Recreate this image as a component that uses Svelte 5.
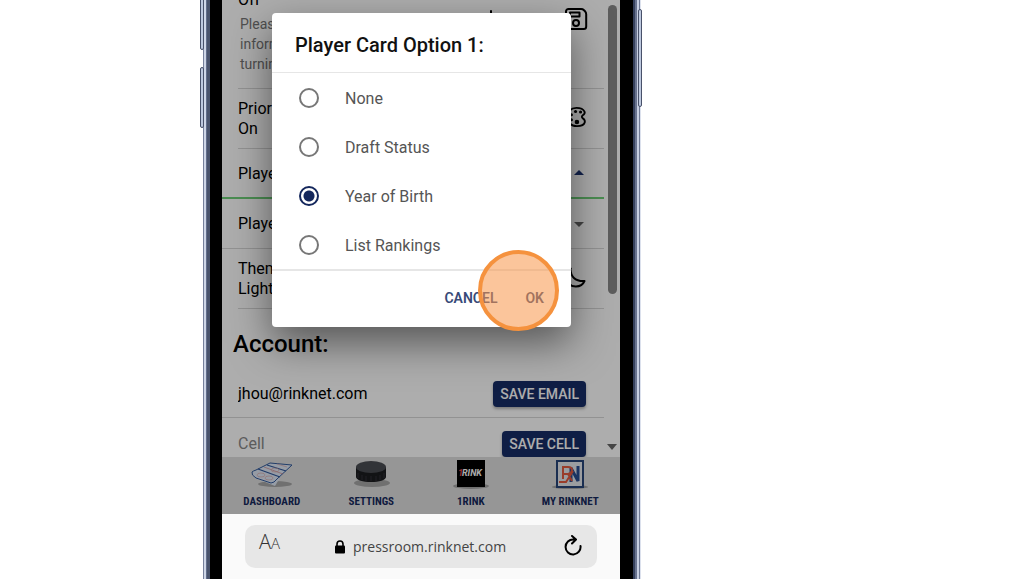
<script lang="ts">
  const options = ["None", "Draft Status", "Year of Birth", "List Rankings"];
  let selected = $state("Year of Birth");
  let email = $state("jhou@rinknet.com");
  let cell = $state("");
  let url = $state("pressroom.rinknet.com");
</script>

<div class="page">
  <div class="phone">
    <span class="side-btn left upper"></span>
    <span class="side-btn left lower"></span>
    <span class="side-btn right"></span>

    <div class="screen">
      <div class="app">
        <div class="scroller">
          <main class="settings">
            <section class="row inset first">
              <div class="row-text">
                <div>Off</div>
                <p class="note">
                  Please check your<br />information before<br />turning this on
                </p>
              </div>
              <svg class="download" viewBox="0 0 24 24" width="24" height="24" aria-hidden="true">
                <path d="M12 4v14M6 12l6 6 6-6M4 22h16" />
              </svg>
              <button class="icon-btn" aria-label="Save settings">
                <svg viewBox="0 0 24 24" width="24" height="24">
                  <path d="M5 2h12c1.300 0 2.200.4 3 1.200l1 1c.8.8 1.200 1.700 1.200 3V19.500a2.500 2.500 0 0 1-2.500 2.500h-15A2.500 2.500 0 0 1 2 19.500v-15A2.500 2.500 0 0 1 5 2z" />
                  <path d="M6 5.500h9.500v4H6z" />
                  <circle cx="12" cy="16" r="3" />
                </svg>
              </button>
            </section>

            <section class="row inset">
              <div class="row-text">Priority Colors:<br />On</div>
              <button class="icon-btn" aria-label="Choose colors">
                <svg viewBox="0 0 24 24" width="22" height="22">
                  <path d="M19.500 13.500c-1.500-1-1.500-2.500 0-3.500 1.800-1 2.500-2 1.800-3.800C20 3.500 16.500 2 12.500 2 6.500 2 2 6.500 2 12s4.500 10 11 10c4 0 8-1.500 8.600-4.200.4-2-.6-3.300-2.100-4.300z" />
                  <g class="solid">
                    <circle cx="17" cy="6.500" r="1.700" />
                    <circle cx="11.500" cy="6" r="1.700" />
                    <circle cx="7" cy="9.500" r="1.700" />
                    <circle cx="7" cy="15" r="1.700" />
                    <circle cx="13" cy="17.500" r="2.500" />
                  </g>
                </svg>
              </button>
            </section>

            <button class="row picker open" aria-haspopup="dialog">
              <span>Player Card Option 1:</span>
              <i class="caret up"></i>
            </button>
            <button class="row picker" aria-haspopup="dialog">
              <span>Player Card Option 2:</span>
              <i class="caret"></i>
            </button>

            <section class="row inset">
              <div class="row-text">Theme:<br />Light</div>
              <button class="icon-btn" aria-label="Switch theme">
                <svg viewBox="0 0 24 24" width="24" height="24">
                  <path d="M7.500 3.500c0 8 4.500 13 14 12.500-1.500 3.500-4.500 5.500-8.500 5.500A9.800 9.800 0 0 1 3 11.700c0-3.700 1.800-6.700 4.800-8.200z" />
                </svg>
              </button>
            </section>

            <h2>Account:</h2>
            <div class="row field">
              <input type="email" aria-label="Email" bind:value={email} />
              <button class="save">SAVE EMAIL</button>
            </div>
            <div class="row field">
              <input type="tel" aria-label="Cell" placeholder="Cell" bind:value={cell} />
              <button class="save">SAVE CELL</button>
            </div>
          </main>
          <div class="scrollbar" aria-hidden="true">
            <span class="thumb"></span>
            <i class="caret"></i>
          </div>
        </div>

        <nav>
          <a href="#dashboard">
            <svg viewBox="0 0 44 30" width="44" height="30" aria-hidden="true">
              <ellipse class="shade" cx="25" cy="25" rx="17" ry="3" />
              <path d="M2 13 20 4 42 6 31 17 25 27 5 19z" fill="#dde6f4" />
              <path d="M2 13Q1 16 6 19L21 24Q24 24 27 20L42 6 20 4 6 11Q3 12 2 13z" fill="none" stroke="#345b9b" stroke-width="1" />
              <path d="M8 10 30 18M17 6 36 12" stroke="#2e5699" stroke-width="1.200" />
              <path d="M14 8 33 15" stroke="#c97777" stroke-width=".6" />
              <g fill="none" stroke="#d9a09c" stroke-width=".6">
                <ellipse cx="11" cy="16" rx="4" ry="2" />
                <ellipse cx="19" cy="19" rx="4" ry="2" />
                <ellipse cx="25" cy="11" rx="4" ry="2" />
                <path d="M27 5l10 3" />
              </g>
            </svg>
            <span>DASHBOARD</span>
          </a>
          <a href="#settings">
            <svg viewBox="0 0 44 30" width="44" height="30" aria-hidden="true">
              <ellipse class="shade" cx="23" cy="24" rx="18" ry="4" />
              <path d="M7 8v10c0 3 7 5 15 5s15-2 15-5V8z" fill="#1b1c20" />
              <path d="M9 14v5M13 16v5M17 17v5M22 17v5M27 17v5M31 16v5M35 14v5" stroke="#303136" />
              <ellipse cx="22" cy="8" rx="15" ry="6" fill="#4b4d53" />
            </svg>
            <span>SETTINGS</span>
          </a>
          <a href="#1rink">
            <svg viewBox="0 0 44 30" width="44" height="30" aria-hidden="true">
              <ellipse class="shade" cx="22" cy="27" rx="18" ry="3" />
              <rect x="8" y="1" width="28" height="27" fill="#000" />
              <g class="mark">
                <text x="9" y="17" fill="#e0443e">1</text>
                <text x="13" y="17" fill="#fff">RINK</text>
              </g>
            </svg>
            <span>1RINK</span>
          </a>
          <a href="#myrinknet">
            <svg viewBox="0 0 44 30" width="44" height="30" aria-hidden="true">
              <ellipse class="shade" cx="22" cy="28" rx="18" ry="2" />
              <rect x="9" y="2" width="26" height="26" fill="#e5e7ec" stroke="#274478" stroke-width="2" />
              <path d="M23 23V9l7 13V7" fill="none" stroke="#274d91" stroke-width="3" />
              <path d="M15 20V8h5q4 0 4 3t-4 4h-5M20 15l4 7M11 23h7l7-11" fill="none" stroke="#e25a40" stroke-width="2" />
            </svg>
            <span>MY RINKNET</span>
          </a>
        </nav>

        <div class="backdrop"></div>

        <div class="dialog" role="dialog" aria-labelledby="dialog-title">
          <h1 id="dialog-title">Player Card Option 1:</h1>
          <div class="options">
            {#each options as option}
              <label>
                <input type="radio" name="card-option" value={option} bind:group={selected} />
                <span>{option}</span>
              </label>
            {/each}
          </div>
          <div class="actions">
            <button>CANCEL</button>
            <button>OK</button>
          </div>
          <span class="tap"></span>
        </div>
      </div>

      <div class="browser">
        <div class="address">
          <button class="text-size" aria-label="Text size">A<small>A</small></button>
          <div class="location">
            <svg viewBox="0 0 10 14" width="10" height="14" aria-hidden="true">
              <rect y="5.500" width="10" height="8" rx="1" />
              <path d="M2 6V4a3 3 0 0 1 6 0v2" fill="none" stroke="#000" stroke-width="1.600" />
            </svg>
            <input type="text" aria-label="Address" bind:value={url} />
          </div>
          <button class="reload" aria-label="Reload">
            <svg viewBox="0 0 18 22" width="18" height="22">
              <path d="M9.500 4.500A7.500 7.500 0 1 0 16.500 11M8 1l4 3.500-4 4" />
            </svg>
          </button>
        </div>
      </div>
    </div>
  </div>
</div>

<style>
  :global(body) {
    margin: 0;
    background: #fff;
  }

  .page {
    display: flex;
    height: 100vh;
    padding-left: 203px;
    overflow: hidden;
    box-sizing: border-box;
    font-family: Roboto, sans-serif;
    font-size: 16px;
    line-height: 20px;
    color: #000;
  }

  button,
  input {
    font: inherit;
    color: inherit;
    border: 0;
    padding: 0;
    margin: 0;
    background: none;
  }

  button {
    cursor: pointer;
  }

  .phone {
    position: relative;
    width: 438px;
    box-sizing: border-box;
    padding: 0 21px 0 19px;
    background: linear-gradient(
      to right,
      #76809b 0 1px,
      #ced6e7 1px 3px,
      #626e8b 3px 4px,
      #49536c 4px 7px,
      #000 7px calc(100% - 8px),
      #35405c calc(100% - 8px) calc(100% - 6px),
      #68728e calc(100% - 6px) calc(100% - 4px),
      #c6cee1 calc(100% - 4px) calc(100% - 2px),
      #6f7994 calc(100% - 2px) calc(100% - 1px),
      #dce1ed calc(100% - 1px)
    );
  }

  .side-btn {
    position: absolute;
    width: 4px;
    box-sizing: border-box;
    background: #bdc8de;
    border: 1px solid #48516a;
    border-radius: 2px;
  }
  .side-btn.left {
    left: -3px;
  }
  .side-btn.upper {
    top: -10px;
    height: 60px;
  }
  .side-btn.lower {
    top: 67px;
    height: 61px;
  }
  .side-btn.right {
    right: -1px;
    top: 9px;
    height: 98px;
  }

  .screen {
    display: flex;
    flex-direction: column;
    height: 100%;
    background: #fafafa;
  }

  .app {
    position: relative;
    flex: 1;
    min-height: 0;
    display: flex;
    flex-direction: column;
    overflow: hidden;
    background: #fff;
  }

  .scroller {
    flex: 1;
    min-height: 0;
    display: flex;
    overflow: hidden;
  }

  .settings {
    flex: 1;
    margin-top: -10px;
  }

  .row {
    display: flex;
    align-items: center;
    justify-content: space-between;
    width: 100%;
    box-sizing: border-box;
    padding: 0 17px 0 16px;
    border-bottom: 1px solid #d8d8d8;
  }
  .row.inset {
    width: auto;
    margin-left: 16px;
    padding: 10px 17px 9px 0;
  }
  .row.inset.first {
    padding: 0 16px 14px 0;
  }
  .row-text {
    flex: 1;
  }
  .note {
    margin: 4px 0 0 2px;
    font-size: 14px;
    color: #757575;
  }

  .icon-btn,
  .download {
    display: flex;
  }
  .icon-btn {
    padding-bottom: 4px;
  }
  .icon-btn svg,
  .download,
  .reload svg {
    fill: none;
    stroke: #000;
    stroke-width: 2;
    stroke-linecap: round;
    stroke-linejoin: round;
  }
  .icon-btn .solid {
    fill: #000;
    stroke: none;
  }
  .first .icon-btn,
  .download {
    align-self: flex-start;
    margin-top: 17px;
  }
  .download {
    margin-right: 61px;
  }

  .picker {
    height: 50px;
    padding-top: 1px;
  }
  .picker.open {
    border-bottom: 2px solid #6fd07a;
  }

  .caret {
    margin-right: 3px;
    border: 5px solid transparent;
    border-top-color: #666;
    border-bottom-width: 0;
  }
  .caret.up {
    margin-bottom: 2px;
    border-top-width: 0;
    border-bottom: 5px solid #1c3474;
  }

  h2 {
    margin: 0;
    padding: 19px 11px 8px;
    font-size: 24px;
    line-height: 32px;
    font-weight: 500;
  }

  .field {
    height: 50px;
    padding: 2px 18px 0 16px;
  }
  .field input {
    flex: 1;
    min-width: 0;
    outline: 0;
  }
  .field input::placeholder {
    color: #888;
    opacity: 1;
  }

  .save {
    height: 26px;
    padding: 0 7px;
    border-radius: 4px;
    background: #172d66;
    color: #fff;
    font-size: 14px;
    font-weight: 500;
    box-shadow: 0 2px 3px rgba(0, 0, 0, 0.3);
  }

  .scrollbar {
    display: flex;
    flex-direction: column;
    align-items: center;
    justify-content: space-between;
    width: 16px;
    padding: 5px 0 7px;
    box-sizing: border-box;
  }
  .scrollbar .thumb {
    width: 9px;
    height: 65%;
    border-radius: 5px;
    background: #8a8a8a;
  }
  .scrollbar .caret {
    margin: 0;
    border-width: 6px 5px 0;
  }

  nav {
    display: flex;
    height: 57px;
    background: #dedede;
  }
  nav a {
    flex: 1;
    display: flex;
    flex-direction: column;
    align-items: center;
    padding-top: 2px;
    color: #16295c;
    text-decoration: none;
    font: bold 11px/26px "Liberation Sans Narrow", "Roboto Condensed", Roboto, sans-serif;
  }
  nav svg {
    flex: none;
  }
  .shade {
    fill: #000;
    opacity: 0.25;
  }
  .mark {
    font: italic bold 9px Roboto, sans-serif;
  }

  .backdrop {
    position: absolute;
    inset: 0;
    background: rgba(0, 0, 0, 0.32);
  }

  .dialog {
    position: absolute;
    top: 13px;
    left: 50px;
    right: 49px;
    border-radius: 4px;
    background: #fff;
    box-shadow: 0 16px 40px rgba(0, 0, 0, 0.5);
  }
  h1 {
    margin: 0;
    padding: 20px 23px 15px;
    font-size: 20px;
    line-height: 24px;
    font-weight: 500;
    color: #111;
  }
  .options {
    border: solid #e6e6e6;
    border-width: 1px 0 2px;
  }
  .options label {
    display: flex;
    align-items: center;
    gap: 26px;
    height: 49px;
    padding-left: 27px;
    color: #555;
  }
  .options span {
    padding-top: 2px;
  }
  .options input {
    appearance: none;
    width: 20px;
    height: 20px;
    box-sizing: border-box;
    border: 2px solid #777;
    border-radius: 50%;
  }
  .options input:checked {
    border-color: #14275c;
    background: radial-gradient(circle, #14275c 5px, #fff 6px);
  }
  .actions {
    display: flex;
    justify-content: flex-end;
    gap: 28px;
    padding: 17px 27px 19px 0;
  }
  .actions button {
    font-size: 14px;
    font-weight: 600;
    color: #384a78;
  }

  .tap {
    position: absolute;
    right: 12px;
    bottom: -4px;
    width: 81px;
    height: 81px;
    box-sizing: border-box;
    border: 4px solid #f5923e;
    border-radius: 50%;
    background: rgba(248, 150, 72, 0.55);
    pointer-events: none;
  }

  .browser {
    padding: 11px 23px;
  }
  .address {
    display: flex;
    align-items: center;
    justify-content: space-between;
    height: 43px;
    padding: 0 15px 0 14px;
    border-radius: 10px;
    background: #e7e7e7;
  }
  .text-size {
    padding-bottom: 8px;
    font: 20px/24px "Open Sans", sans-serif;
    font-weight: 300;
    color: #333;
  }
  .text-size small {
    font-size: 15px;
  }
  .location {
    display: flex;
    align-items: center;
    gap: 8px;
  }
  .location input {
    width: 156px;
    font: 14px/20px "Open Sans", sans-serif;
    color: #444;
    outline: 0;
  }
  .reload {
    display: flex;
    padding-bottom: 2px;
  }
</style>
